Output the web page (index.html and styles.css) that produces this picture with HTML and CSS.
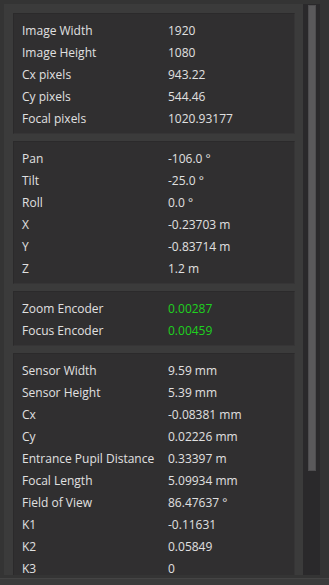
FILE: index.html
```html
<!DOCTYPE html>
<html>
<head>
<meta charset="utf-8">
<link rel="stylesheet" href="styles.css">
</head>
<body>
<div class="app">
  <div class="main">
    <div class="frame">
      <div class="scroll">
        <section class="panel">
          <div class="row"><span class="label">Image Width</span><span class="value">1920</span></div>
          <div class="row"><span class="label">Image Height</span><span class="value">1080</span></div>
          <div class="row"><span class="label">Cx pixels</span><span class="value">943.22</span></div>
          <div class="row"><span class="label">Cy pixels</span><span class="value">544.46</span></div>
          <div class="row"><span class="label">Focal pixels</span><span class="value">1020.93177</span></div>
        </section>
        <section class="panel">
          <div class="row"><span class="label">Pan</span><span class="value">-106.0 °</span></div>
          <div class="row"><span class="label">Tilt</span><span class="value">-25.0 °</span></div>
          <div class="row"><span class="label">Roll</span><span class="value">0.0 °</span></div>
          <div class="row"><span class="label">X</span><span class="value">-0.23703 m</span></div>
          <div class="row"><span class="label">Y</span><span class="value">-0.83714 m</span></div>
          <div class="row"><span class="label">Z</span><span class="value">1.2 m</span></div>
        </section>
        <section class="panel">
          <div class="row"><span class="label">Zoom Encoder</span><span class="value green">0.00287</span></div>
          <div class="row"><span class="label">Focus Encoder</span><span class="value green">0.00459</span></div>
        </section>
        <section class="panel">
          <div class="row"><span class="label">Sensor Width</span><span class="value">9.59 mm</span></div>
          <div class="row"><span class="label">Sensor Height</span><span class="value">5.39 mm</span></div>
          <div class="row"><span class="label">Cx</span><span class="value">-0.08381 mm</span></div>
          <div class="row"><span class="label">Cy</span><span class="value">0.02226 mm</span></div>
          <div class="row"><span class="label">Entrance Pupil Distance</span><span class="value">0.33397 m</span></div>
          <div class="row"><span class="label">Focal Length</span><span class="value">5.09934 mm</span></div>
          <div class="row"><span class="label">Field of View</span><span class="value">86.47637 °</span></div>
          <div class="row"><span class="label">K1</span><span class="value">-0.11631</span></div>
          <div class="row"><span class="label">K2</span><span class="value">0.05849</span></div>
          <div class="row"><span class="label">K3</span><span class="value">0</span></div>
        </section>
      </div>
      <div class="scrollbar"><div class="thumb"></div></div>
    </div>
  </div>
  <div class="footer"></div>
</div>
</body>
</html>
```

FILE: styles.css
```css
html, body {
  margin: 0;
  padding: 0;
}
body {
  width: 329px;
  height: 585px;
  overflow: hidden;
  background: #343434;
  font-family: "Open Sans", "Noto Sans", sans-serif;
  font-size: 12px;
  color: #e0e0e0;
}
.app {
  display: flex;
  flex-direction: column;
  height: 585px;
}
.main {
  padding: 4px 9px 0 4px;
  height: 575px;
  box-sizing: border-box;
  display: flex;
}
.frame {
  flex: 1;
  display: flex;
  height: 571px;
  overflow: hidden;
}
.scroll {
  flex: 1;
  background: #3b3b3b;
  padding: 9px 8px 0 9px;
  display: flex;
  flex-direction: column;
  gap: 7px;
  overflow: hidden;
}
.panel {
  flex: none;
  background: #302f30;
  border: 1px solid #2b2a2b;
  border-right-color: #363536;
  border-bottom-color: #363536;
  padding: 5px 8px 4px 8px;
}
.row {
  display: grid;
  grid-template-columns: 146px 1fr;
  height: 22px;
  align-items: center;
  white-space: nowrap;
}
.value.green {
  color: #1fd11f;
}
.scrollbar {
  width: 17px;
  background: #2a292b;
  padding: 1px 4px 0 5px;
  box-sizing: border-box;
}
.thumb {
  height: 466px;
  background: #5a595b;
  border: 1px solid #4e4d4f;
  box-sizing: border-box;
}
.footer {
  margin-top: 3px;
  height: 7px;
  background: #3b3b3b;
  border-top: 1px solid #444;
}
```
